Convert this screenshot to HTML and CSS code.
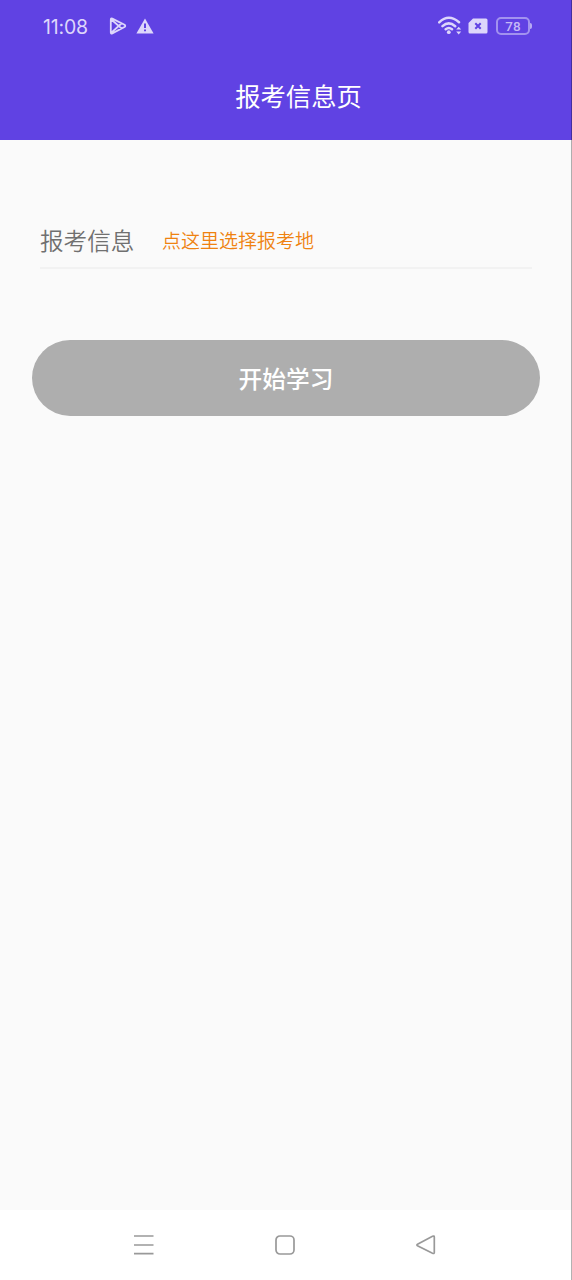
FILE: index.html
```html
<!DOCTYPE html>
<html lang="zh-CN">
<head>
<meta charset="utf-8">
<title>报考信息页</title>
<link rel="stylesheet" href="styles.css">
</head>
<body>
<div class="screen">
  <header class="header">
    <div class="status">
      <span class="time">11:08</span>
      <svg class="play" width="18" height="18" viewBox="0 0 18 18"><path d="M1.800 2.700Q1.800 1 3.300 1.600L15.500 7.800Q17 8.900 15.500 10L3.300 16.400Q1.800 17 1.800 15.500ZM2.300 2.500L12.500 11.400M2.300 15.600L12.500 6.500"/></svg>
      <svg class="warn" width="18" height="16" viewBox="0 0 18 16"><path class="solid" d="M9 .5L17.6 15.5H.4Z"/><path class="mark" d="M9 5.5V10M9 11.6V13.3"/></svg>
      <svg class="wifi" width="24" height="20" viewBox="0 0 24 20"><path class="arc" d="M1.2 6.3Q10.700-2.700 21 6.300M4.500 10.200Q10.700 4.500 17.200 10.200M7.700 13.300Q10.800 10.800 14 13.300"/><circle class="solid" cx="10.800" cy="16.200" r="1.900"/><path class="solid" d="M18.200 13.600L20.700 10.800L23.200 13.600ZM18.200 15.600L20.700 18.400L23.200 15.600Z"/></svg>
      <svg class="sim" width="20" height="16" viewBox="0 0 20 16"><path class="solid" d="M5 .5H18Q19.5.5 19.5 2V14Q19.5 15.5 18 15.5H2Q.5 15.5.5 14V5Z"/><path class="mark" d="M7.300 5.300L12.700 10.700M12.700 5.300L7.300 10.700"/></svg>
      <span class="battery">78</span><span class="battery-tip"></span>
    </div>
    <h1 class="title">报考信息页</h1>
  </header>
  <main class="content">
    <div class="field">
      <span class="label">报考信息</span>
      <span class="choice">点这里选择报考地</span>
    </div>
    <button class="start">开始学习</button>
  </main>
  <nav class="nav">
    <svg width="22" height="22" viewBox="0 0 22 22"><path d="M1 2H20.500M1 11H20.500M1 19.700H20.500"/></svg>
    <svg width="22" height="22" viewBox="0 0 22 22"><rect x="2" y="2" width="18" height="18" rx="4"/></svg>
    <svg width="22" height="22" viewBox="0 0 22 22"><path d="M2.500 10.200L17.500 2.300Q19.300 1.600 19.300 3V18.500Q19.300 20 17.500 19.200L2.500 11.800Q1.300 11 2.500 10.200Z"/></svg>
  </nav>
  <div class="edge"></div>
</div>
</body>
</html>
```
FILE: styles.css
```css
body {
  margin: 0;
  font-family: "Noto Sans CJK SC", sans-serif;
}
.screen {
  position: relative;
  display: flex;
  flex-direction: column;
  width: 572px;
  height: 1280px;
  background: #fafafa;
}
.header {
  height: 140px;
  background: #6042e3;
}
.status {
  display: flex;
  align-items: center;
  height: 52px;
  padding-left: 43px;
  color: #ddd6fb;
}
.time {
  width: 66px;
  padding-top: 2px;
  font: 19.500px/24px Inter, Roboto, sans-serif;
  letter-spacing: -0.200px;
}
.play, .arc {
  fill: none;
  stroke: #ddd6fb;
  stroke-width: 1.8;
}
.arc {
  stroke-width: 2.500;
  stroke-linecap: round;
}
.solid {
  fill: #ddd6fb;
}
.mark {
  fill: none;
  stroke: #6042e3;
  stroke-width: 2;
}
.warn {
  margin-left: 9px;
}
.wifi {
  margin-left: 284px;
}
.sim {
  margin-left: 6px;
  margin-bottom: 1px;
}
.battery {
  box-sizing: border-box;
  width: 34px;
  height: 18px;
  margin-left: 8px;
  border: 2px solid #a292ef;
  border-radius: 5px;
  font: 500 13.500px/15px Roboto, sans-serif;
  text-align: center;
  color: #c5b9f6;
}
.battery-tip {
  width: 2px;
  height: 6px;
  border-radius: 0 2px 2px 0;
  background: #b7a9f3;
}
.title {
  margin: 23px 0 0;
  padding-left: 25px;
  font-size: 25.300px;
  font-weight: 400;
  line-height: 40px;
  text-align: center;
  color: #fff;
}
.content {
  flex: 1;
  padding: 72px 32px 0;
}
.field {
  display: flex;
  align-items: center;
  height: 55px;
  margin: 0 8px;
  border-bottom: 2px solid #f2f2f2;
}
.label {
  width: 122px;
  font-size: 23.600px;
  font-weight: 350;
  color: #707070;
}
.choice {
  font-size: 19px;
  font-weight: 350;
  color: #ef8210;
}
.start {
  display: block;
  width: 508px;
  height: 76px;
  margin-top: 71px;
  padding: 0;
  border: 0;
  border-radius: 38px;
  background: #aeaeae;
  font-family: inherit;
  font-size: 23.700px;
  font-weight: 500;
  color: #fff;
}
.nav {
  display: flex;
  align-items: center;
  justify-content: space-between;
  height: 70px;
  padding: 0 135px 0 133px;
  background: #fff;
}
.nav svg {
  fill: none;
  stroke: #999;
  stroke-width: 1.700;
}
.edge {
  position: absolute;
  top: 0;
  right: 0;
  width: 1px;
  height: 1280px;
  background: rgba(0, 0, 0, 0.3);
}
```
